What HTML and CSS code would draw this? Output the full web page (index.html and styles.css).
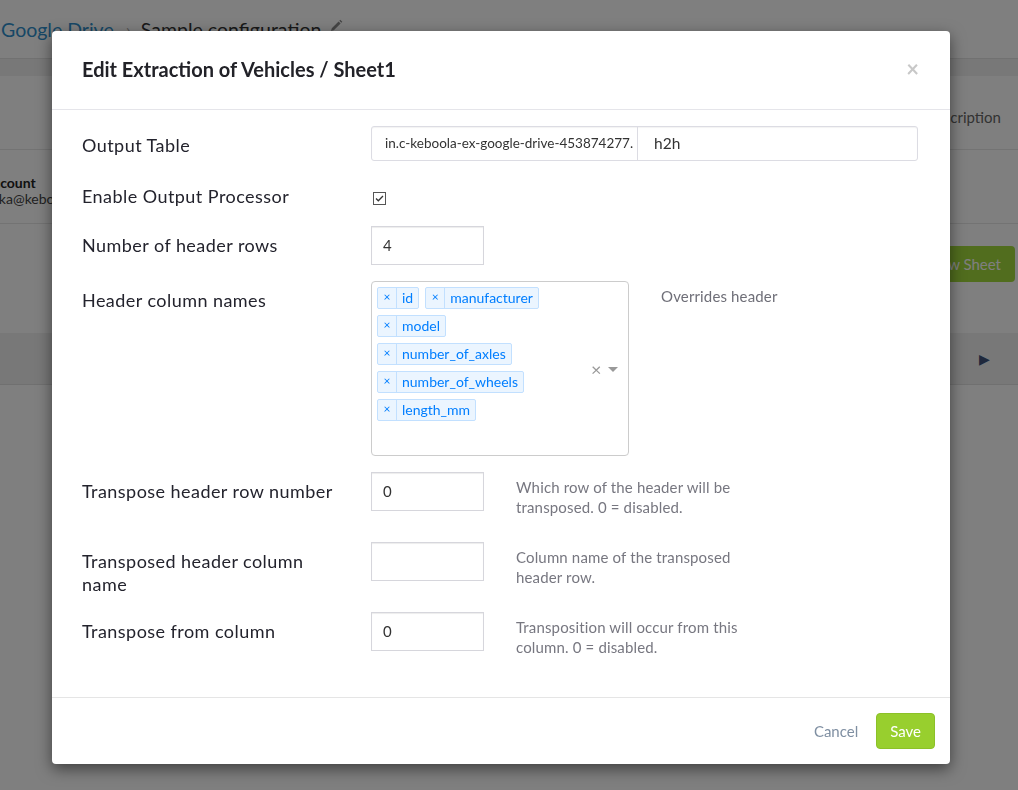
FILE: index.html
```html
<!DOCTYPE html>
<html>
<head>
<meta charset="utf-8">
<link rel="stylesheet" href="styles.css">
</head>
<body>
<div class="page">
  <div class="crumbs">
    <span class="crumb-link">Google Drive</span>
    <span class="crumb-sep">›</span>
    <span class="crumb-current">Sample configuration</span>
    <svg class="pencil" width="14" height="14" viewBox="0 0 14 14"><path d="M2 12 L2.8 9.2 L9.6 2.4 L11.6 4.4 L4.8 11.2 Z M10.3 1.7 L11.3 0.7 L13.3 2.7 L12.3 3.7 Z" fill="#8a8a8a"/></svg>
  </div>
  <div class="band"></div>
  <div class="desc-row"><span class="desc-text">Description</span></div>
  <div class="account-row">
    <div class="account-name">Account</div>
    <div class="account-mail">mika@keboola.com</div>
  </div>
  <div class="actions-row"><span class="btn-new">+ New Sheet</span></div>
  <div class="sheet-row"><span class="play">▶</span></div>
</div>
<div class="overlay"></div>
<div class="modal">
  <div class="modal-header">
    <h4 class="modal-title">Edit Extraction of Vehicles / Sheet1</h4>
    <span class="close">×</span>
  </div>
  <div class="modal-body">
    <div class="row row-output">
      <div class="label">Output Table</div>
      <div class="input-group">
        <div class="ig-prefix">in.c-keboola-ex-google-drive-453874277.</div>
        <div class="ig-input">h2h</div>
      </div>
    </div>
    <div class="row row-check">
      <div class="label">Enable Output Processor</div>
      <div class="check-wrap">
        <span class="checkbox"><svg width="11" height="11" viewBox="0 0 11 11"><path d="M2 5.5 L4.3 7.8 L9 3" fill="none" stroke="#333" stroke-width="1.3"/></svg></span>
      </div>
    </div>
    <div class="row">
      <div class="label">Number of header rows</div>
      <div class="input">4</div>
    </div>
    <div class="row">
      <div class="label">Header column names</div>
      <div class="multi">
        <div class="tags">
          <span class="tag"><span class="tag-x">×</span><span class="tag-label">id</span></span>
          <span class="tag"><span class="tag-x">×</span><span class="tag-label">manufacturer</span></span>
          <span class="tag"><span class="tag-x">×</span><span class="tag-label">model</span></span>
          <span class="tag"><span class="tag-x">×</span><span class="tag-label">number_of_axles</span></span>
          <span class="tag"><span class="tag-x">×</span><span class="tag-label">number_of_wheels</span></span>
          <span class="tag"><span class="tag-x">×</span><span class="tag-label">length_mm</span></span>
        </div>
        <span class="multi-clear">×</span>
        <span class="multi-arrow"></span>
      </div>
      <div class="help help-wide">Overrides header</div>
    </div>
    <div class="row row-help">
      <div class="label">Transpose header row number</div>
      <div class="input">0</div>
      <div class="help">Which row of the header will be transposed. 0 = disabled.</div>
    </div>
    <div class="row row-help">
      <div class="label">Transposed header column name</div>
      <div class="input"></div>
      <div class="help">Column name of the transposed header row.</div>
    </div>
    <div class="row row-help">
      <div class="label">Transpose from column</div>
      <div class="input">0</div>
      <div class="help">Transposition will occur from this column. 0 = disabled.</div>
    </div>
  </div>
  <div class="modal-footer">
    <span class="btn-cancel">Cancel</span>
    <span class="btn-save">Save</span>
  </div>
</div>
</body>
</html>
```
FILE: styles.css
```css
* { box-sizing: border-box; }
html, body { margin: 0; padding: 0; }
body {
  width: 1018px;
  height: 790px;
  overflow: hidden;
  font-family: Lato, "Open Sans", "Liberation Sans", sans-serif;
  color: #333;
  background: #fff;
}
.page { height: 790px; background: #fff; }
.crumbs {
  height: 58px;
  display: flex;
  align-items: center;
  font-size: 19.5px;
}
.crumb-link { color: #2f8fcc; margin-left: 1px; }
.crumb-sep { color: #aaa; margin: 0 10px 0 12px; font-size: 18px; }
.crumb-current { color: #333; }
.pencil { margin-left: 8px; margin-top: -6px; }
.band {
  height: 18px;
  background: #f1f1f1;
  border-top: 1px solid #e3e3e3;
}
.desc-row {
  height: 74px;
  border-bottom: 1px solid #e6e6e6;
  display: flex;
  align-items: center;
  justify-content: flex-end;
  padding: 8px 17px 0 0;
  font-size: 15px;
  color: #666;
}
.account-row {
  height: 74px;
  border-bottom: 1px solid #e6e6e6;
  padding: 25px 0 0 0;
  margin-left: -16px;
  font-size: 14px;
  line-height: 16px;
}
.account-name { font-weight: bold; color: #222; }
.account-mail { color: #444; }
.actions-row {
  height: 109px;
  display: flex;
  justify-content: flex-end;
  align-items: flex-start;
  padding: 22px 3px 0 0;
}
.btn-new {
  background: #a2da3c;
  color: #fff;
  border-radius: 4px;
  padding: 0 14px 0 40px;
  height: 36px;
  line-height: 36px;
  font-size: 15px;
}
.sheet-row {
  height: 52px;
  background: #f0f0f0;
  border-bottom: 1px solid #e0e0e0;
  display: flex;
  align-items: center;
  justify-content: flex-end;
  padding-right: 28px;
  color: #3e5078;
  font-size: 14px;
}
.overlay {
  position: fixed;
  inset: 0;
  background: rgba(0, 0, 0, 0.5);
}
.modal {
  position: absolute;
  left: 52px;
  top: 31px;
  width: 898px;
  background: #fff;
  border-radius: 4px;
  box-shadow: 0 5px 15px rgba(0, 0, 0, 0.5);
}
.modal-header {
  display: flex;
  justify-content: space-between;
  align-items: center;
  padding: 26px 30px 28px 30px;
  border-bottom: 1px solid #e5e5ea;
}
.modal-title {
  margin: 0;
  font-size: 20px;
  line-height: 24px;
  font-weight: bold;
  color: #222228;
}
.close {
  font-size: 22px;
  font-weight: bold;
  line-height: 24px;
  color: #c8c8c8;
  margin-right: 1px;
}
.modal-body {
  padding: 16px 32px 15px 30px;
}
.row {
  display: flex;
  align-items: flex-start;
  margin-bottom: 16px;
}
.label {
  width: 289px;
  flex: none;
  padding-top: 8px;
  line-height: 23px;
  font-size: 18px;
  letter-spacing: 0.45px;
  color: #23232d;
  padding-right: 20px;
}
.row-check { min-height: 33px; }
.check-wrap { padding-top: 15px; }
.checkbox {
  display: block;
  width: 13px;
  height: 13px;
  border: 1px solid #555;
  background: #fff;
  margin-left: 2px;
}
.checkbox svg { display: block; }
.input-group {
  flex: 1;
  display: flex;
  height: 35px;
  border: 1px solid #dcdce3;
  border-radius: 3px;
  box-shadow: inset 0 1px 1px rgba(0, 0, 0, 0.05);
}
.ig-prefix {
  width: 266px;
  flex: none;
  border-right: 1px solid #dcdce3;
  padding-left: 13px;
  font-size: 13.5px;
  line-height: 33px;
  white-space: nowrap;
  overflow: hidden;
  color: #333;
}
.ig-input {
  flex: 1;
  padding-left: 16px;
  font-size: 15.5px;
  line-height: 33px;
  color: #333;
}
.input {
  width: 113px;
  height: 39px;
  flex: none;
  border: 1px solid #d6d6dc;
  box-shadow: inset 0 1px 1px rgba(0, 0, 0, 0.075);
  padding-left: 11px;
  font-size: 15px;
  line-height: 37px;
  color: #333;
}
.help {
  margin-left: 32px;
  padding-top: 5px;
  margin-bottom: 9px;
  width: 240px;
  font-size: 15px;
  letter-spacing: 0.15px;
  line-height: 20px;
  color: #777780;
}
.help-wide { width: 200px; color: #6f6f78; }
.multi {
  width: 258px;
  height: 175px;
  flex: none;
  border: 1px solid #ccc;
  border-radius: 4px;
  display: flex;
  align-items: center;
  padding: 5px 0 5px 5px;
}
.tags {
  align-self: flex-start;
  width: 205px;
  display: flex;
  flex-wrap: wrap;
  gap: 6px 6px;
}
.tag {
  display: flex;
  height: 22px;
  background: #ebf5ff;
  border: 1px solid #c2e0ff;
  border-radius: 2px;
  color: #007eff;
  font-size: 14px;
  line-height: 20px;
}
.tag-x {
  width: 19px;
  text-align: center;
  border-right: 1px solid #c2e0ff;
  font-size: 12px;
  line-height: 18px;
}
.tag-label { padding: 0 5px 0 5px; }
.multi-clear {
  margin-left: 9px;
  color: #999;
  font-size: 18px;
  line-height: 18px;
}
.multi-arrow {
  margin-left: 7px;
  width: 0;
  height: 0;
  border-left: 5px solid transparent;
  border-right: 5px solid transparent;
  border-top: 5px solid #999;
  margin-top: 2px;
}
.modal-footer {
  display: flex;
  justify-content: flex-end;
  align-items: center;
  border-top: 1px solid #e5e5e5;
  padding: 15px 15px 15px 0;
}
.btn-cancel {
  color: #7f8fa2;
  font-size: 15px;
  padding: 0 12px;
  margin-right: 6px;
  line-height: 36px;
}
.btn-save {
  background: #98cf2e;
  border: 1px solid #8cc128;
  border-radius: 4px;
  color: #fff;
  font-size: 15px;
  height: 36px;
  line-height: 34px;
  padding: 0 13px;
}
```
